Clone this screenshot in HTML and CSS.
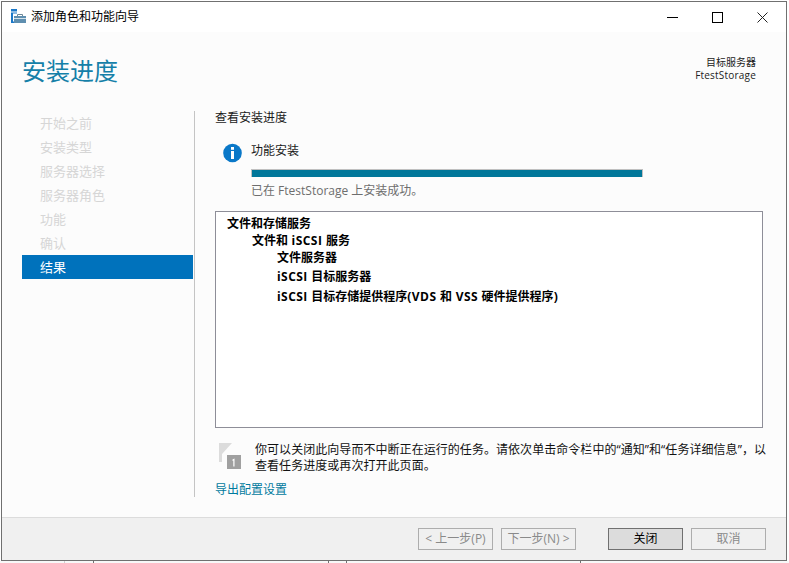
FILE: index.html
```html
<!DOCTYPE html>
<html lang="zh-CN">
<head>
<meta charset="utf-8">
<title>添加角色和功能向导</title>
<link rel="stylesheet" href="styles.css">
</head>
<body>
<div class="window">
  <header class="titlebar">
    <svg class="app-icon" width="15" height="14" viewBox="0 0 15 14">
      <path d="M0 0h6v2.500H0z" fill="#1b78c8"/>
      <path d="M0 3.500h6v1H2v8h1v1.500H0z" fill="#1b78c8"/>
      <path d="M3 7h12v7H3z" fill="#5f8fb0"/>
      <path d="M6.500 7V5.500h5V7" fill="none" stroke="#6d8797"/>
      <path d="M3 9.500h12" stroke="#d5e2ea"/>
    </svg>
    <span class="title">添加角色和功能向导</span>
    <div class="controls">
      <svg width="11" height="11" viewBox="0 0 11 11"><path d="M0 5.500h11" stroke="#000"/></svg>
      <svg width="11" height="11" viewBox="0 0 11 11"><rect x=".5" y=".5" width="10" height="10" fill="none" stroke="#000"/></svg>
      <svg width="11" height="11" viewBox="0 0 11 11"><path d="M.5.5l10 10M10.500.5l-10 10" stroke="#222" fill="none"/></svg>
    </div>
  </header>
  <div class="page">
    <div class="page-head">
      <h1>安装进度</h1>
      <div class="target"><div>目标服务器</div><div class="host">FtestStorage</div></div>
    </div>
    <div class="page-body">
      <nav class="steps">
        <div class="step">开始之前</div>
        <div class="step">安装类型</div>
        <div class="step">服务器选择</div>
        <div class="step">服务器角色</div>
        <div class="step">功能</div>
        <div class="step">确认</div>
        <div class="step active">结果</div>
      </nav>
      <main class="content">
        <div class="caption">查看安装进度</div>
        <div class="status">
          <svg class="info" width="20" height="20" viewBox="0 0 20 20">
            <circle cx="9.500" cy="10" r="9.300" fill="#0a78c8"/>
            <rect x="8" y="4" width="3" height="2.800" fill="#fff"/>
            <rect x="8" y="8" width="3" height="8" fill="#fff"/>
          </svg>
          <div class="status-text">
            <div class="status-label">功能安装</div>
            <div class="bar"><div class="fill"></div></div>
            <div class="status-msg">已在 FtestStorage 上安装成功。</div>
          </div>
        </div>
        <div class="results">
          <div class="l1">文件和存储服务</div>
          <div class="l2">文件和<span class="lat"> iSCSI </span>服务</div>
          <div class="l3">文件服务器</div>
          <div class="l3 r2"><span class="lat">iSCSI </span>目标服务器</div>
          <div class="l3 r3"><span class="lat">iSCSI </span>目标存储提供程序<span class="lat">(VDS </span>和<span class="lat"> VSS </span>硬件提供程序<span class="lat">)</span></div>
        </div>
        <div class="notice">
          <svg class="flag" width="22" height="27" viewBox="0 0 22 27">
            <path d="M0 0h3v19H0z" fill="#dcdcdc"/>
            <path d="M3 0h10L3 11z" fill="#dcdcdc"/>
            <rect x="8" y="12" width="14" height="14" fill="#a0a0a0"/>
            <path d="M13.500 16.500l2-1v8h-1.200v-6l-.8.4z" fill="#fff"/>
          </svg>
          <p>你可以关闭此向导而不中断正在运行的任务。请依次单击命令栏中的“通知”和“任务详细信息”，以查看任务进度或再次打开此页面。</p>
        </div>
        <a class="export">导出配置设置</a>
      </main>
    </div>
  </div>
  <footer class="footer">
    <button class="btn off">&lt; 上一步(P)</button>
    <button class="btn off">下一步(N) &gt;</button>
    <button class="btn primary">关闭</button>
    <button class="btn off">取消</button>
  </footer>
</div>
<div class="backdrop">
  <i class="tick t1"></i><i class="tick t2"></i><i class="tick t3"></i><i class="tick t4"></i><i class="tick t5"></i>
</div>
</body>
</html>
```
FILE: styles.css
```css
* { box-sizing: border-box; }
html, body { margin: 0; height: 100%; background: #fff; overflow: hidden; }
body { padding: 1px; font: 12px/16px "Open Sans", "Noto Sans CJK SC", sans-serif; color: #1a1a1a; }
.window { width: 786px; height: 560px; border: 1px solid #707070; display: flex; flex-direction: column; background: #fcfcfc; }
.titlebar { height: 30px; background: #fff; display: flex; align-items: center; padding-left: 9px; flex: none; }
.app-icon { margin: 0 5px 2px 0; }
.title { color: #000; }
.controls { margin-left: auto; display: flex; gap: 34px; padding-right: 18px; align-items: center; }
.page { flex: 1; display: flex; flex-direction: column; min-height: 0; }
.page-head { height: 79px; flex: none; display: flex; justify-content: space-between; padding: 0 30px 0 20px; }
h1 { margin: 22px 0 0; font-size: 24px; line-height: 34px; font-weight: 400; color: #1580a8; }
.target { margin-top: 24px; text-align: right; font-size: 10px; line-height: 13px; color: #222; }
.host { letter-spacing: .2px; }
.page-body { flex: 1; display: flex; min-height: 0; }
.steps { width: 171px; margin-left: 20px; flex: none; color: #d6d6d6; font-size: 13px; }
.step { height: 24px; line-height: 24px; padding-left: 18px; }
.step.active { background: #0072bc; color: #fff; }
.content { margin-left: 1px; flex: 1; border-left: 1px solid #c4c4c4; padding-left: 20px; margin-right: 23px; height: 386px; display: flex; flex-direction: column; }
.content > * { flex: none; }
.caption { line-height: 12px; margin-top: 1px; }
.status { display: flex; margin: 19px 0 0 8px; }
.info { margin-right: 8px; flex: none; }
.status-label { line-height: 16px; }
.bar { width: 392px; height: 8px; margin-top: 10px; background: #00779a; border: 1px solid #c0c0c0; border-width: 1px 1px 0; }
.fill { height: 100%; }
.status-msg { margin-top: 4px; color: #6e6e6e; line-height: 20px; }
.results { margin-top: 10px; height: 217px; border: 1px solid #8e8e98; background: #fff; font-weight: 700; color: #000; padding-top: 3px; }
.results > div { line-height: 17px; }
.lat { letter-spacing: .45px; }
.l1 { padding-left: 11px; }
.l2 { padding-left: 36px; }
.l3 { padding-left: 61px; }
.results > .r2 { margin-top: 2px; }
.results > .r3 { margin-top: 3px; }
.notice { display: flex; margin: 13px -9px 0 0; }
.flag { margin: 2px 0 0 4px; flex: none; }
.notice p { margin: 0 0 0 14px; padding-top: 1px; line-height: 16px; color: #111; letter-spacing: .05px; }
.export { margin-top: 9px; color: #007a9e; line-height: 14px; }
.footer { height: 43px; flex: none; background: #f0f0f0; border-top: 1px solid #dcdcdc; display: flex; align-items: center; padding: 0 20px 0 0; justify-content: flex-end; }
.btn { width: 75px; height: 22px; padding: 0; font: inherit; border: 1px solid #adadad; background: #f0f0f0; color: #8a8a8a; margin-left: 8px; }
.btn.primary { background: #dcdcdc; border-color: #707070; color: #000; margin-left: 32px; }
.backdrop { position: absolute; left: 0; top: 561px; width: 789px; height: 2px; background: #f8f8f8; }
.tick { position: absolute; top: 0; width: 1px; height: 2px; background: #707070; }
.t1 { left: 64px; background: #cfcfcf; }
.t2 { left: 93px; }
.t3 { left: 328px; }
.t4 { left: 346px; }
.t5 { left: 580px; }
```
